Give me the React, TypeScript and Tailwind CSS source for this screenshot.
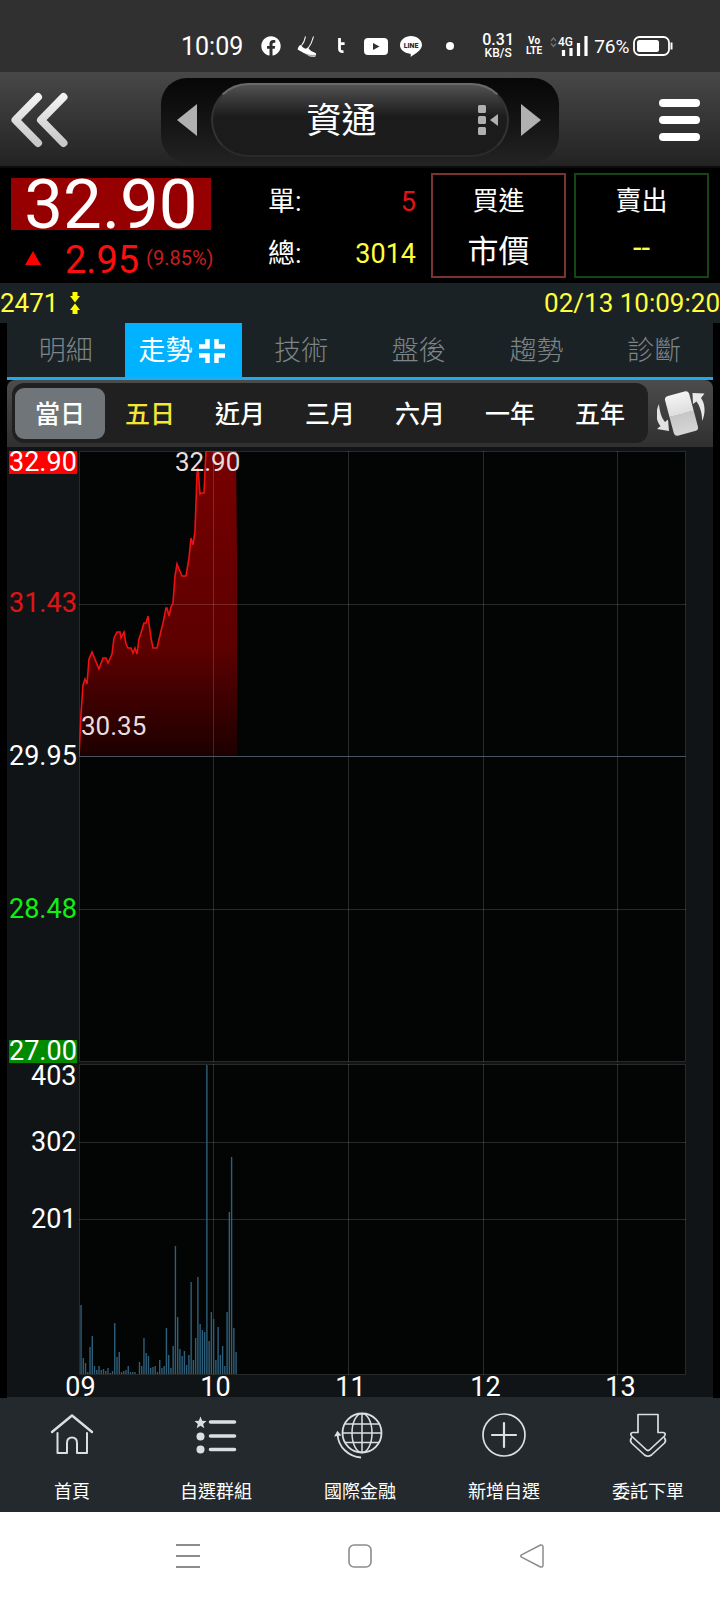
import { useState, type ReactNode } from "react";
import { FaFacebook } from "react-icons/fa";

const PRICE_POINTS: [number, number][] = [
  [0, 306], [2, 263], [4, 234], [6, 228], [8, 233], [10, 208], [13, 201], [20, 218], [24, 207],
  [27, 207], [29, 212], [33, 203], [35, 187], [38, 181], [41, 181], [42, 187], [45, 181], [47, 193],
  [49, 197], [52, 197], [54, 202], [56, 197], [58, 203], [60, 188], [62, 182], [65, 172], [67, 172],
  [69, 165], [72, 187], [74, 197], [78, 197], [82, 180], [84, 172], [87, 157], [88, 157], [90, 165],
  [92, 156], [94, 152], [96, 125], [98, 113], [100, 118], [103, 125], [107, 125], [110, 107],
  [112, 87], [114, 94], [116, 80], [118, 23], [119, 17], [121, 43], [122, 42], [125, 42], [127, 0],
  [157, 0],
];

const VOLUMES = [
  69, 16, 11, 2, 27, 38, 8, 4, 8, 4, 5, 3, 6, 1, 3, 51, 17, 22, 2, 3, 4, 8, 2, 2, 2, 0, 12, 8, 36, 21,
  18, 6, 7, 8, 2, 14, 6, 8, 46, 19, 6, 28, 128, 57, 25, 18, 23, 9, 19, 92, 14, 36, 97, 50, 44, 42,
  309, 33, 62, 55, 14, 47, 19, 28, 8, 62, 162, 217, 46, 22,
];

const TABS = ["明細", "走勢", "技術", "盤後", "趨勢", "診斷"];
const RANGES = ["當日", "五日", "近月", "三月", "六月", "一年", "五年"];
const HOURS = ["09", "10", "11", "12", "13"];
const HOUR_LINES = [135, 270, 405, 539];

function StatusBar() {
  return (
    <div className="flex h-[72px] items-center bg-[#303030] pt-5 pr-[46px] pl-[181px] text-white">
      <span className="text-[25px] leading-none">10:09</span>
      <FaFacebook className="ml-[18px] size-5" />
      <svg className="ml-4 h-[21px] w-5" viewBox="0 0 20 21" fill="none" stroke="#fff">
        <path d="M8.5 0.5 Q7.500 6 4.5 9.500 M16.500 0.5 Q15 7 11 12.5" strokeWidth="1.1" />
        <path d="M3 9 Q1 10.500 0.6 13.500 Q7 17.500 13 20.500 L18 20.700 Q20 18.500 18.500 17 Q13.500 15.500 10.500 11.500 Q9.500 13 8 12.500 Q5 11.500 4.500 9.500Z" fill="#fff" stroke="none" />
        <path d="M0.8 14.500 Q7 18.200 13 19.400 L19 19.300" stroke="#303030" strokeWidth="0.500" />
      </svg>
      <svg className="ml-5 h-4 w-2" viewBox="0 0 8 16" fill="none" stroke="#fff" strokeWidth="2.800">
        <path d="M2.500 0 V11 Q2.500 14 6.500 13.600 M2 5.600 H7.600" />
      </svg>
      <svg className="ml-[19px] h-[17px] w-6" viewBox="0 0 24 17">
        <rect width="24" height="17" rx="4" fill="#fff" />
        <path d="M9 5 V12 L15.500 8.500Z" fill="#303030" />
      </svg>
      <svg className="ml-3 h-[21px] w-[22px]" viewBox="0 0 22 21">
        <path d="M11 0 C17 0 22 4 22 9 C22 14 15 18 10.500 21 C11 19 11 18 10 17.800 C4 17 0 13.500 0 9 C0 4 5 0 11 0Z" fill="#fff" />
        <text x="11" y="11.800" textAnchor="middle" fontSize="7" fontWeight="900" fontFamily="Roboto" fill="#303030">LINE</text>
      </svg>
      <span className="ml-6 size-2 rounded-full bg-white" />
      <div className="ml-7 flex flex-col items-center font-medium">
        <span className="text-[16px] leading-[14px]">0.31</span>
        <span className="text-[12px] leading-[12px]">KB/S</span>
      </div>
      <div className="ml-3 flex flex-col items-center font-['Liberation_Sans_Narrow',Roboto,sans-serif] text-[10px] leading-[10px] font-bold">
        <span>Vo</span>
        <span>LTE</span>
      </div>
      <svg className="ml-2 h-5 w-[39px]" viewBox="0 0 39 20">
        <path d="M1 5 L3.500 2 L6 5 M1 7.500 L3.500 10.500 L6 7.500" fill="none" stroke="#777" strokeWidth="1.200" />
        <text x="8" y="10" fontSize="12" fontWeight="500" fontFamily="Roboto" fill="#fff">4G</text>
        <path d="M13.500 14 V20 M21 12 V20 M28.500 7 V20 M36 0 V20" stroke="#fff" strokeWidth="3.200" />
      </svg>
      <span className="ml-[5px] text-[19px] leading-none">76%</span>
      <svg className="ml-1 h-5 w-10 shrink-0" viewBox="0 0 40 20">
        <rect x="1" y="1" width="35" height="18" rx="5.500" fill="none" stroke="#fff" strokeWidth="1.800" />
        <rect x="4" y="4" width="22" height="12" rx="2.500" fill="#fff" />
        <path d="M38.500 6.500 V13.500" stroke="#fff" strokeWidth="2" />
      </svg>
    </div>
  );
}

function Header() {
  return (
    <header className="grid h-24 grid-cols-[151px_1fr_151px] items-center border-b-2 border-[#0c0c0c] bg-linear-to-b from-[#484848] to-[#232323] px-2.5 pt-0.5">
      <button aria-label="返回" className="justify-self-start">
        <svg className="h-[56px] w-[60px]" viewBox="0 0 60 56" fill="none" strokeWidth="8" strokeLinecap="round" strokeLinejoin="round">
          <defs>
            <linearGradient id="chevron" x1="0" y1="0" x2="0" y2="1">
              <stop offset="0" stopColor="#f2f2f2" />
              <stop offset="1" stopColor="#c8c8c8" />
            </linearGradient>
          </defs>
          <path d="M28 5 L5.500 28 L28 51 M53.500 5 L31 28 L53.500 51" stroke="url(#chevron)" />
        </svg>
      </button>
      <div className="flex h-[84px] items-center rounded-[26px] bg-linear-to-b from-[#070707] to-[#222222] pr-[18px] pl-4">
        <button aria-label="上一檔">
          <svg className="h-8 w-5" viewBox="0 0 20 32">
            <path d="M0 16 L20 0 V32Z" fill="#b0b0b0" />
          </svg>
        </button>
        <button className="mr-3 ml-3.5 flex h-[74px] flex-1 items-center rounded-full border-2 border-t-[#6a6a6a] border-r-[#333333] border-b-[#2a2a2a] border-l-[#333333] bg-linear-to-b from-[#525252] via-[#1c1c1c] via-45% to-[#1b1b1b] pr-2 text-white">
          <span className="mr-2 flex-1 pt-0.5 text-[35px] leading-none">資通</span>
          <svg className="h-[30px] w-[21px]" viewBox="0 0 21 30" fill="#b0b0b0">
            <rect x="0" y="0" width="8" height="8" rx="1.500" />
            <rect x="0" y="11" width="8" height="8" rx="1.500" />
            <rect x="0" y="22" width="8" height="8" rx="1.500" />
            <path d="M12 15 L20 9 V21Z" />
          </svg>
        </button>
        <button aria-label="下一檔">
          <svg className="h-8 w-5" viewBox="0 0 20 32">
            <path d="M20 16 L0 0 V32Z" fill="#b0b0b0" />
          </svg>
        </button>
      </div>
      <button aria-label="選單" className="mr-2.5 flex flex-col gap-[9px] justify-self-end">
        <span className="h-2 w-[41px] rounded-full bg-white" />
        <span className="h-2 w-[41px] rounded-full bg-white" />
        <span className="h-2 w-[41px] rounded-full bg-white" />
      </button>
    </header>
  );
}

function Quote() {
  return (
    <section className="flex h-[115px] items-start bg-black pr-[11px] pl-[11px] text-white">
      <div className="w-[204px] shrink-0 pt-[10px]">
        <div className="flex h-[52px] w-[200px] items-center justify-center bg-[#960000] text-[69px] leading-none">32.90</div>
        <div className="flex h-[52px] items-center pt-1 text-[#fb0f0f]">
          <svg className="ml-3.5 h-3.5 w-4" viewBox="0 0 16 14">
            <path d="M8 0 L16 14 H0Z" fill="#ff0000" />
          </svg>
          <span className="ml-6 pt-1 text-[38px] leading-none">2.95</span>
          <span className="ml-[7px] text-[20px] leading-none text-[#c81e1e]">(9.85%)</span>
        </div>
      </div>
      <dl className="mr-[15px] ml-[53px] grid flex-1 grid-cols-[auto_1fr] grid-rows-[52px_52px] items-center pt-2 text-[27px] leading-none">
        <dt>單:</dt>
        <dd className="text-right text-[#e01414]">5</dd>
        <dt>總:</dt>
        <dd className="text-right text-[#ffff3c]">3014</dd>
      </dl>
      <div className="mt-[5px] flex gap-2">
        <button className="flex h-[105px] w-[135px] flex-col items-center border-2 border-[#7d3232] pt-3 text-[26px] leading-[28px]">
          <span>買進</span>
          <span className="mt-5 text-[31px] leading-[34px]">市價</span>
        </button>
        <button className="flex h-[105px] w-[135px] flex-col items-center border-2 border-[#154415] pt-3 text-[26px] leading-[28px]">
          <span>賣出</span>
          <span className="mt-4 text-[31px] leading-[34px] text-[#ffff3c]">--</span>
        </button>
      </div>
    </section>
  );
}

function InfoRow() {
  return (
    <div className="flex h-10 items-center justify-between bg-[#1b2225] text-[26px] leading-none text-[#ffff3c]">
      <span className="flex items-center gap-3">
        2471
        <svg className="h-[22px] w-2.5" viewBox="0 0 10 22" fill="#ffff00">
          <path d="M2.500 0 H7.500 V4 H10 L5 10.500 L0 4 H2.500Z M2.500 22 H7.500 V18 H10 L5 11.500 L0 18 H2.500Z" />
        </svg>
      </span>
      <time>02/13 10:09:20</time>
    </div>
  );
}

function Tabs({ active, onSelect }: { active: string; onSelect: (tab: string) => void }) {
  return (
    <nav className="flex h-[57px] border-b-3 border-[#1eaaeb] bg-[#1b2225]">
      {TABS.map((tab) => (
        <button
          key={tab}
          onClick={() => onSelect(tab)}
          className={
            tab === active
              ? "flex flex-1 items-center justify-center gap-1.5 bg-[#00b2ff] pt-0.5 text-[27px] leading-none text-white"
              : "flex flex-1 items-center justify-center pt-0.5 text-[27px] leading-none font-light text-[#7d8588]"
          }
        >
          {tab}
          {tab === active && (
            <svg className="mr-1 size-[26px]" viewBox="0 0 26 26" fill="none" stroke="#fff" strokeWidth="4.500">
              <path d="M8.500 1 V8.500 H0 M17.500 1 V8.500 H26 M8.500 25 V17.500 H0 M17.500 25 V17.500 H26" />
            </svg>
          )}
        </button>
      ))}
    </nav>
  );
}

function RangeBar({ active, onSelect }: { active: string; onSelect: (range: string) => void }) {
  return (
    <div className="flex h-[67px] items-start rounded-t-[8px] bg-linear-to-b from-[#4c4c4c] to-[#303030] pt-[3px] pl-[5px]">
      <div className="flex h-[60px] flex-1 items-center rounded-[12px] bg-[#202020] px-[3px]">
        {RANGES.map((range) => (
          <button
            key={range}
            onClick={() => onSelect(range)}
            className={
              range === active
                ? "h-[51px] flex-1 rounded-[9px] bg-[#70757a] pt-0.5 text-[25px] leading-none font-medium text-white"
                : range === "五日"
                  ? "h-[51px] flex-1 pt-0.5 text-[25px] leading-none font-medium text-[#f5e636]"
                  : "h-[51px] flex-1 pt-0.5 text-[25px] leading-none font-medium text-white"
            }
          >
            {range}
          </button>
        ))}
      </div>
      <button aria-label="旋轉" className="flex h-[60px] w-[65px] items-center justify-center">
        <svg className="h-[46px] w-12" viewBox="0 0 48 46">
          <defs>
            <linearGradient id="device" x1="0" y1="0" x2="0" y2="1">
              <stop offset="0" stopColor="#f4f4f4" />
              <stop offset="0.500" stopColor="#dedede" />
              <stop offset="0.500" stopColor="#c6c6c6" />
              <stop offset="1" stopColor="#d6d6d6" />
            </linearGradient>
          </defs>
          <rect x="12" y="3" width="25" height="41" rx="4" transform="rotate(-15 24.500 23.500)" fill="url(#device)" />
          <path d="M2 14 C-2 22 -1 31 3.500 36 L0 39 L12 41 L11 29.500 L8 32 C4.500 28 2.500 21 2 14Z" fill="#e2e2e2" />
          <path d="M45 31 C49 23 48 13 44 8 L47.500 3.500 L35.500 3 L36 14 L39.500 11.500 C43 16 45.500 24 45 31Z" fill="#e8e8e8" />
        </svg>
      </button>
    </div>
  );
}

function AxisLabel({ children, className }: { children: ReactNode; className: string }) {
  return <span className={"block h-[23px] w-[68px] text-[27px] leading-[23px] " + className}>{children}</span>;
}

function PriceChart() {
  const line = PRICE_POINTS.map(([x, y]) => `${x},${y}`).join(" ");
  return (
    <div className="flex items-start">
      <div className="grid w-[72px] shrink-0 grid-rows-[76px_153px_153px_153px_77px] items-center pl-0.5">
        <AxisLabel className="self-start bg-[#ff0000] text-white">32.90</AxisLabel>
        <AxisLabel className="text-[#e01414]">31.43</AxisLabel>
        <AxisLabel className="text-white">29.95</AxisLabel>
        <AxisLabel className="text-[#12f012]">28.48</AxisLabel>
        <AxisLabel className="self-end bg-[#008a00] text-white">27.00</AxisLabel>
      </div>
      <div className="relative flex-1">
        <svg className="block h-[611px] w-full" viewBox="0 0 607 611" preserveAspectRatio="none">
          <defs>
            <linearGradient id="fall" x1="0" y1="0" x2="0" y2="1">
              <stop offset="0" stopColor="#780000" />
              <stop offset="0.650" stopColor="#5c0000" />
              <stop offset="1" stopColor="#1c0000" />
            </linearGradient>
          </defs>
          <rect width="607" height="611" fill="#030505" />
          <polygon points={`${line} 158,110 158,306 0,306`} fill="url(#fall)" />
          <g stroke="#ffffff" strokeOpacity="0.150">
            {HOUR_LINES.map((x) => (
              <path key={x} d={`M${x - 0.5} 0 V611`} />
            ))}
            <path d="M0 153.500 H607 M0 458.500 H607" />
            <rect x="0.500" y="0.500" width="606" height="610" fill="none" />
          </g>
          <path d="M0 305.500 H607" stroke="#4b5560" />
          <polyline points={line} fill="none" stroke="#f01010" strokeWidth="1.600" />
        </svg>
        <span className="absolute top-0 left-24 text-[26px] leading-[23px] text-[#e6dede]">32.90</span>
        <span className="absolute top-[264px] left-0.5 text-[26px] leading-[23px] text-[#e6dede]">30.35</span>
      </div>
    </div>
  );
}

function VolumeChart() {
  return (
    <div className="mt-px flex text-[27px] text-white">
      <div className="grid w-[72px] shrink-0 grid-rows-[39px_77px_77px_118px] items-center pl-6 leading-[24px]">
        <span className="self-start">403</span>
        <span>302</span>
        <span>201</span>
      </div>
      <svg className="block h-[311px] min-w-0 flex-1" viewBox="0 0 607 311" preserveAspectRatio="none">
        <rect width="607" height="311" fill="#030505" />
        <g fill="none" stroke="#ffffff" strokeOpacity="0.150">
          {HOUR_LINES.map((x) => (
            <path key={x} d={`M${x - 0.5} 0 V311`} />
          ))}
          <path d="M0 78.500 H607 M0 155.500 H607" />
          <rect x="0.500" y="0.500" width="606" height="310" />
        </g>
        {VOLUMES.map((height, minute) => (
          <rect key={minute} x={(minute + 1) * 2.247 - 0.9} y={310 - height} width="1.400" height={height} fill="#2e5f7a" />
        ))}
      </svg>
    </div>
  );
}

function Chart() {
  return (
    <section className="border-b border-[#25292c] bg-[#111416] pt-1">
      <div className="pr-[27px]">
        <PriceChart />
        <VolumeChart />
      </div>
      <div className="flex h-[22px] pr-[25px] pl-[6px] text-center text-[27px] leading-[25px] text-white">
        {HOURS.map((hour) => (
          <span key={hour} className="flex-1">
            {hour}
          </span>
        ))}
      </div>
    </section>
  );
}

const NAV_ITEMS: { label: string; icon: ReactNode }[] = [
  {
    label: "首頁",
    icon: (
      <g strokeWidth="2.400" strokeLinejoin="round" strokeLinecap="round">
        <path d="M4 21 L24 4.500 L44 21" />
        <path d="M9.500 22 V42 H19 V32 Q19 26.500 24 26.500 Q29 26.500 29 32 V42 H39 V22" strokeWidth="2" />
      </g>
    ),
  },
  {
    label: "自選群組",
    icon: (
      <g>
        <path d="M8.500 5.500 L10.200 9.800 L14.500 10 L11.200 12.900 L12.300 17.200 L8.500 14.800 L4.700 17.200 L5.800 12.900 L2.500 10 L6.800 9.800Z" fill="#dcdfe1" stroke="none" />
        <circle cx="8.500" cy="25.500" r="4" fill="#dcdfe1" stroke="none" />
        <circle cx="8.500" cy="38.500" r="4" fill="#dcdfe1" stroke="none" />
        <path d="M18.500 11 H42.500 M18.500 25 H42.500 M18.500 38.500 H42.500" strokeWidth="3.600" strokeLinecap="round" />
      </g>
    ),
  },
  {
    label: "國際金融",
    icon: (
      <g strokeWidth="1.500">
        <circle cx="26" cy="22" r="19.500" strokeWidth="1.800" />
        <ellipse cx="26" cy="22" rx="10" ry="19.500" />
        <path d="M26 2.500 V41.500 M6.500 22 H45.500 M9 13 H43 M9 31.500 H43" />
        <path d="M1.500 23 Q2 33 9 39.500 Q16 46 25 46.500" strokeWidth="1.800" />
        <path d="M-0.500 24.500 L1.500 21 L4 24Z" fill="#dcdfe1" />
      </g>
    ),
  },
  {
    label: "新增自選",
    icon: (
      <g>
        <circle cx="24" cy="24" r="21" strokeWidth="1.700" />
        <path d="M24 12 V36 M12 24 H36" strokeWidth="2.200" strokeLinecap="round" />
      </g>
    ),
  },
  {
    label: "委託下單",
    icon: (
      <g strokeWidth="1.700" strokeLinejoin="round" strokeLinecap="round">
        <path d="M14 3.500 H34 V21.500 H39 Q42.500 22 40.500 25 L26 38.500 Q24 40.500 22 38.500 L7.500 25 Q5.500 22 9 21.500 H14Z" />
        <path d="M7.500 27 Q5.500 29.500 7.500 32 L20.500 44 Q24 46.500 27.500 44 L40.500 32 Q42.500 29.500 40.500 27" />
      </g>
    ),
  },
];

function BottomNav() {
  return (
    <nav className="flex h-[114px] bg-[#24292d] pt-[13px]">
      {NAV_ITEMS.map(({ label, icon }) => (
        <a key={label} href="#" className="flex flex-1 flex-col items-center text-[18px] leading-6 text-white">
          <svg className="size-12 overflow-visible" viewBox="0 0 48 48" fill="none" stroke="#dcdfe1">
            {icon}
          </svg>
          <span className="mt-[21px]">{label}</span>
        </a>
      ))}
    </nav>
  );
}

function SystemBar() {
  return (
    <div className="flex h-[88px] items-center justify-center gap-[148px] bg-white">
      <button aria-label="最近">
        <svg className="h-[26px] w-6" viewBox="0 0 24 26" stroke="#8c8c8c" strokeWidth="2">
          <path d="M0 2 H24 M0 13 H24 M0 24 H24" />
        </svg>
      </button>
      <button aria-label="主畫面">
        <svg className="h-[26px] w-6" viewBox="0 0 24 26" fill="none" stroke="#8c8c8c" strokeWidth="1.600">
          <rect x="1" y="2" width="22" height="22" rx="5" />
        </svg>
      </button>
      <button aria-label="上一頁">
        <svg className="h-[26px] w-6" viewBox="0 0 24 26" fill="none" stroke="#8c8c8c" strokeWidth="1.500" strokeLinejoin="round">
          <path d="M1.500 11.800 L20.500 2 Q23 1.500 23 4 V22 Q23 24.500 20.500 24 L1.500 14.200 Q0 13 1.500 11.800Z" />
        </svg>
      </button>
    </div>
  );
}

export default function App() {
  const [tab, setTab] = useState("走勢");
  const [range, setRange] = useState("當日");
  return (
    <main className="bg-black font-[Roboto,'Noto_Sans_CJK_TC',sans-serif]">
      <StatusBar />
      <Header />
      <Quote />
      <InfoRow />
      <div className="px-[7px]">
        <Tabs active={tab} onSelect={setTab} />
        <RangeBar active={range} onSelect={setRange} />
        <Chart />
      </div>
      <BottomNav />
      <SystemBar />
    </main>
  );
}
